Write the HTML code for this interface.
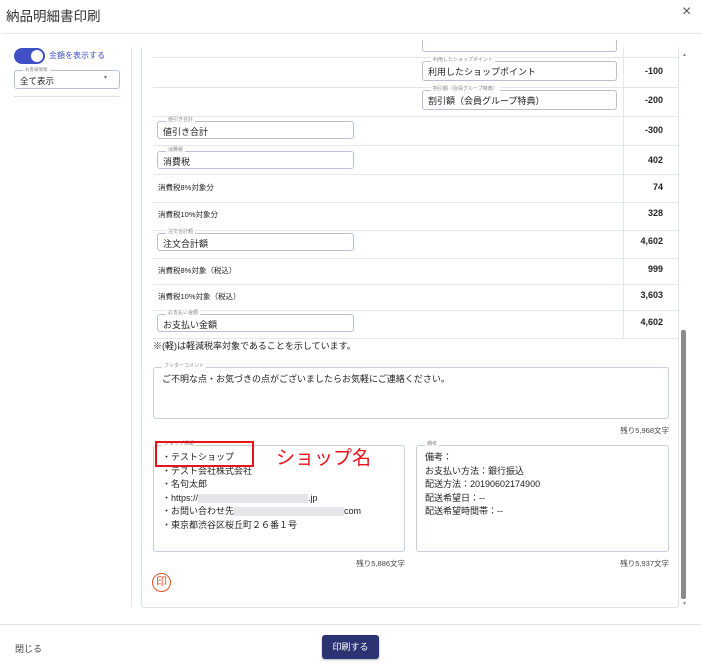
<!DOCTYPE html><html><head><meta charset="utf-8"><style>
body{margin:0;width:701px;height:670px;background:#fff;font-family:"Liberation Sans","Noto Sans CJK JP",sans-serif;color:#222;position:relative;overflow:hidden}
.a{position:absolute}
.t{font-size:9px;white-space:nowrap}
.hl{position:absolute;height:1px;background:#e3e6ee}
.in{position:absolute;border:1px solid #b9c0d4;border-radius:3px;box-sizing:border-box;font-size:9px;padding:3px 5px 0;white-space:nowrap}
.lb{position:absolute;top:-5px;left:8px;font-size:5px;color:#888;background:#fff;padding:0 2px;line-height:7px}
.v{position:absolute;right:38px;font-size:9px;font-weight:bold;text-align:right}
.ta{position:absolute;border:1px solid #c9cedd;border-radius:3px;box-sizing:border-box;font-size:9px;line-height:13.5px;padding:6px 8px}
.cnt{position:absolute;font-size:7.5px;color:#444;text-align:right}
</style></head><body>
<div class="a" style="left:6px;top:5px;font-size:13.5px;color:#333">納品明細書印刷</div>
<div class="a" style="left:682px;top:3px;font-size:16px;color:#555">×</div>
<div class="hl" style="left:2px;top:33px;width:699px"></div>
<div class="a" style="left:14px;top:48px;width:31px;height:16px;border-radius:8px;background:#3f4fc6"></div>
<div class="a" style="left:31px;top:50px;width:12px;height:12px;border-radius:6px;background:#fff"></div>
<div class="a t" style="left:49px;top:50px;font-size:8px;color:#3f4fc6">金額を表示する</div>
<div class="in" style="left:14px;top:70px;width:106px;height:19px;padding-top:4px;font-size:8.5px"><span class="lb" style="font-size:4.5px">お客様情報</span>全て表示<span style="position:absolute;right:12px;top:3px;font-size:6px;color:#777">▾</span></div>
<div class="hl" style="left:14px;top:96px;width:106px;background:#dde1ea"></div>
<div class="a" style="left:131px;top:47px;width:1px;height:560px;background:#e3e6ee"></div>
<div class="a" style="left:141px;top:47px;width:538px;height:561px;border:1px solid #dfe3ec;border-top:none;border-radius:0 0 3px 3px;box-sizing:border-box"></div>
<div class="a" style="left:623px;top:47px;width:1px;height:291px;background:#e3e6ee"></div>
<div class="hl" style="left:153px;top:57px;width:525px"></div>
<div class="hl" style="left:153px;top:87px;width:525px"></div>
<div class="hl" style="left:153px;top:116px;width:525px"></div>
<div class="hl" style="left:153px;top:145px;width:525px"></div>
<div class="hl" style="left:153px;top:174px;width:525px"></div>
<div class="hl" style="left:153px;top:202px;width:525px"></div>
<div class="hl" style="left:153px;top:230px;width:525px"></div>
<div class="hl" style="left:153px;top:258px;width:525px"></div>
<div class="hl" style="left:153px;top:284px;width:525px"></div>
<div class="hl" style="left:153px;top:310px;width:525px"></div>
<div class="hl" style="left:153px;top:338px;width:525px"></div>
<div class="a" style="left:422px;top:40px;width:195px;height:12px;border:1px solid #b9c0d4;border-top:none;border-radius:0 0 3px 3px;box-sizing:border-box"></div>
<div class="in" style="left:422px;top:61px;width:195px;height:20px"><span class="lb">利用したショップポイント</span>利用したショップポイント</div><div class="v" style="top:66px">-100</div>
<div class="in" style="left:422px;top:90px;width:195px;height:20px"><span class="lb">割引額（会員グループ特典）</span>割引額（会員グループ特典）</div><div class="v" style="top:95px">-200</div>
<div class="in" style="left:157px;top:121px;width:197px;height:18px"><span class="lb">値引き合計</span>値引き合計</div><div class="v" style="top:125px">-300</div>
<div class="in" style="left:157px;top:151px;width:197px;height:18px"><span class="lb">消費税</span>消費税</div><div class="v" style="top:155px">402</div>
<div class="a t" style="left:158px;top:182px;font-size:7.5px">消費税8%対象分</div><div class="v" style="top:182px">74</div>
<div class="a t" style="left:158px;top:209px;font-size:7.5px">消費税10%対象分</div><div class="v" style="top:208px">328</div>
<div class="in" style="left:157px;top:233px;width:197px;height:18px"><span class="lb">注文合計額</span>注文合計額</div><div class="v" style="top:236px">4,602</div>
<div class="a t" style="left:158px;top:265px;font-size:7.5px">消費税8%対象（税込）</div><div class="v" style="top:264px">999</div>
<div class="a t" style="left:158px;top:291px;font-size:7.5px">消費税10%対象（税込）</div><div class="v" style="top:290px">3,603</div>
<div class="in" style="left:157px;top:314px;width:197px;height:18px"><span class="lb">お支払い金額</span>お支払い金額</div><div class="v" style="top:317px">4,602</div>
<div class="a t" style="left:153px;top:339px">※(軽)は軽減税率対象であることを示しています。</div>
<div class="ta" style="left:153px;top:367px;width:516px;height:52px;padding-top:5px"><span class="lb">フッターコメント</span>ご不明な点・お気づきの点がございましたらお気軽にご連絡ください。</div>
<div class="cnt" style="left:560px;top:425px;width:109px">残り5,968文字</div>
<div class="ta" style="left:153px;top:445px;width:252px;height:107px;padding-top:5px"><span class="lb">ショップ情報</span>・テストショップ<br>・テスト会社株式会社<br>・名句太郎<br>・https://<span style="display:inline-block;width:110px;height:9px;background:#e6e6ea;vertical-align:middle"></span>.jp<br>・お問い合わせ先<span style="display:inline-block;width:110px;height:9px;background:#e6e6ea;vertical-align:middle"></span>com<br>・東京都渋谷区桜丘町２６番１号</div>
<div class="ta" style="left:416px;top:445px;width:253px;height:107px;padding-top:5px"><span class="lb">備考</span>備考：<br>お支払い方法：銀行振込<br>配送方法：20190602174900<br>配送希望日：--<br>配送希望時間帯：--</div>
<div class="cnt" style="left:300px;top:558px;width:105px">残り5,886文字</div>
<div class="cnt" style="left:560px;top:558px;width:109px">残り5,937文字</div>
<div class="a" style="left:155px;top:441px;width:99px;height:26px;border:2px solid #e8141b;box-sizing:border-box"></div>
<div class="a t" style="left:276px;top:443px;font-size:19px;color:#e8141b">ショップ名</div>
<div class="a" style="left:152px;top:573px;width:19px;height:19px;border:1.5px solid #d9532a;border-radius:50%;box-sizing:border-box;color:#d9532a;font-size:11px;line-height:16px;text-align:center">印</div>
<div class="a" style="left:682px;top:52px;font-size:5px;color:#888">▲</div>
<div class="a" style="left:681px;top:330px;width:5px;height:269px;background:#8a8a8a;border-radius:2px"></div>
<div class="a" style="left:682px;top:601px;font-size:5px;color:#888">▼</div>
<div class="hl" style="left:0;top:624px;width:701px"></div>
<div class="a t" style="left:15px;top:642px;font-size:9px;color:#444">閉じる</div>
<div class="a" style="left:322px;top:635px;width:57px;height:24px;background:#2b3373;border-radius:3px;color:#fff;font-size:9px;text-align:center;line-height:24px;box-shadow:0 1px 2px rgba(0,0,0,.3)">印刷する</div>
</body></html>
